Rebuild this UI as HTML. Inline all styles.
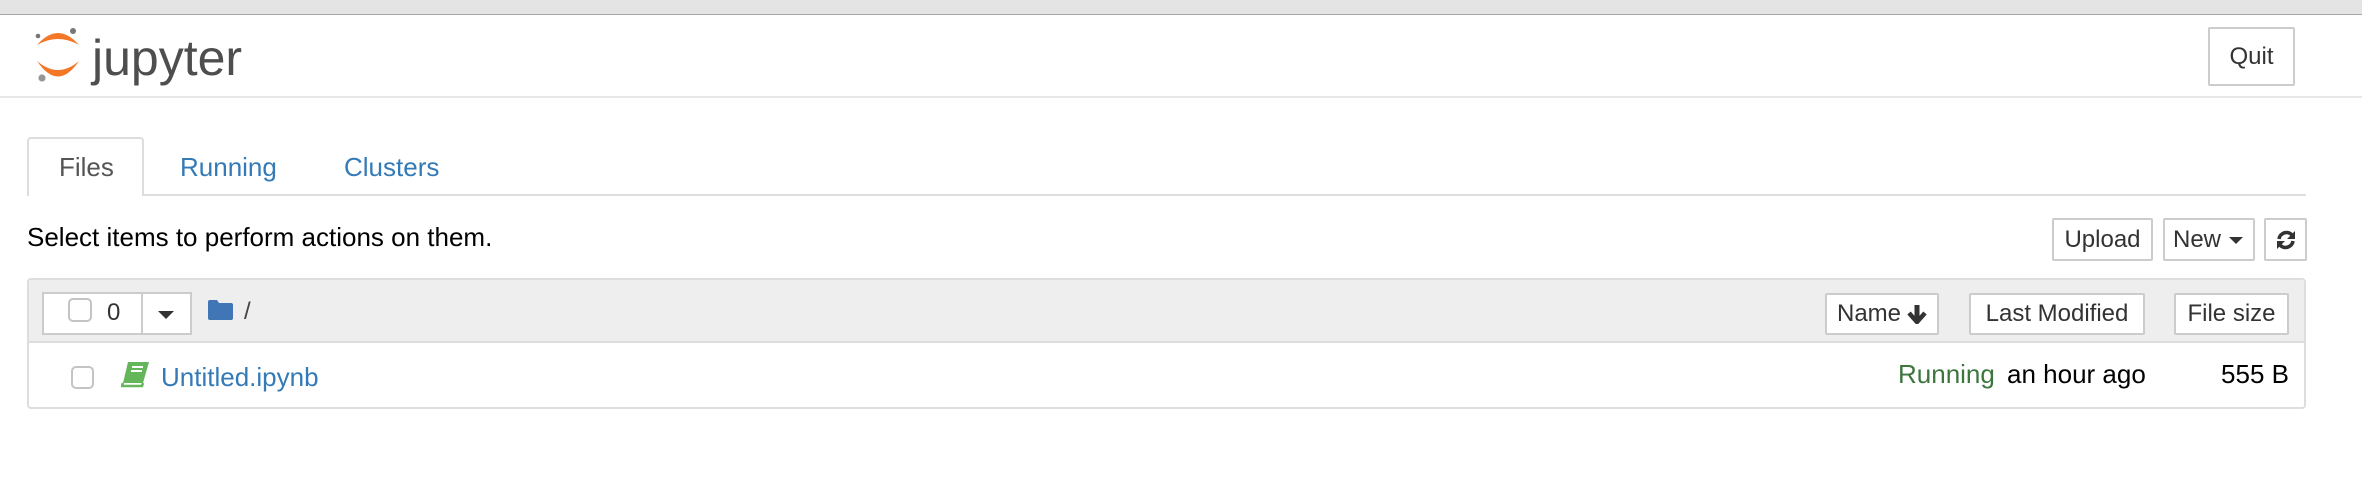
<!DOCTYPE html>
<html><head><meta charset="utf-8"><style>
*{margin:0;padding:0;box-sizing:border-box}
html,body{width:2362px;height:482px;overflow:hidden;background:#fff;font-family:"Liberation Sans",Arial,sans-serif;position:relative}
.a{position:absolute;white-space:nowrap}
.t26{font-size:26px;line-height:26px}
.btn{position:absolute;border:2px solid #ccc;background:#fff;display:flex;align-items:center;justify-content:center;font-size:24px;color:#333;border-radius:2px}
.link{color:#337ab7}
</style></head><body>
<div class="a" style="left:0;top:0;width:2362px;height:15px;background:#e4e4e4;border-bottom:1px solid #a5a5a5"></div>
<svg class="a" style="left:0;top:0" width="100" height="100">
<path d="M37,45 Q58,21 79,45 Q58,33 37,45 Z" fill="#f37726"/>
<path d="M37,61 Q58,92 79,61 Q58,79 37,61 Z" fill="#f37726"/>
<circle cx="38" cy="36" r="2.3" fill="#767677"/>
<circle cx="73" cy="31" r="3" fill="#767677"/>
<circle cx="42" cy="78" r="3.6" fill="#989798"/>
</svg>
<div class="a" style="left:92px;top:33px;font-size:50px;line-height:50px;color:#4e4e4e">jupyter</div>
<div class="btn" style="left:2208px;top:27px;width:87px;height:59px">Quit</div>
<div class="a" style="left:0;top:96px;width:2362px;height:2px;background:#e7e7e7"></div>

<div class="a" style="left:27px;top:194px;width:2279px;height:2px;background:#ddd"></div>
<div class="a" style="left:27px;top:137px;width:117px;height:59px;border:2px solid #ddd;border-bottom:none;border-radius:4px 4px 0 0;background:#fff"></div>
<div class="a t26" style="left:59px;top:154px;color:#555">Files</div>
<div class="a t26 link" style="left:180px;top:154px">Running</div>
<div class="a t26 link" style="left:344px;top:154px">Clusters</div>

<div class="a t26" style="left:27px;top:224px;color:#000">Select items to perform actions on them.</div>
<div class="btn" style="left:2052px;top:218px;width:101px;height:43px">Upload</div>
<div class="btn" style="left:2163px;top:218px;width:92px;height:43px">New<svg width="18" height="10" style="margin-left:6px"><path d="M2,2 L16,2 L9,9 Z" fill="#333"/></svg></div>
<div class="btn" style="left:2264px;top:218px;width:43px;height:43px"><svg width="22" height="22" viewBox="0 0 22 22"><path d="M4,10 A7.5,7.5 0 0 1 17,6" stroke="#333" stroke-width="3.6" fill="none"/><path d="M20,2 L20,10 L12,10 Z" fill="#333"/><path d="M18,12 A7.5,7.5 0 0 1 5,16" stroke="#333" stroke-width="3.6" fill="none"/><path d="M2,20 L2,12 L10,12 Z" fill="#333"/></svg></div>

<div class="a" style="left:27px;top:278px;width:2279px;height:131px;border:2px solid #ddd;border-radius:4px;background:#fff"></div>
<div class="a" style="left:29px;top:280px;width:2275px;height:63px;background:#eee;border-bottom:2px solid #ddd"></div>
<div class="a" style="left:42px;top:292px;width:150px;height:43px;border:2px solid #ccc;background:#fff"></div>
<div class="a" style="left:141px;top:292px;width:2px;height:43px;background:#ccc"></div>
<div class="a" style="left:68px;top:298px;width:24px;height:24px;border:2px solid #c4c4c4;border-radius:5px;background:#fff"></div>
<div class="a" style="left:107px;top:301px;font-size:24px;line-height:24px;color:#333">0</div>
<svg class="a" style="left:157px;top:310px" width="18" height="10"><path d="M1,1 L17,1 L9,9 Z" fill="#333"/></svg>
<svg class="a" style="left:208px;top:299px" width="26" height="22"><path d="M0,3 Q0,1 2,1 L9,1 L11,4 L23,4 Q25,4 25,6 L25,19 Q25,21 23,21 L2,21 Q0,21 0,19 Z" fill="#4176b6"/></svg>
<div class="a" style="left:244px;top:300px;font-size:24px;line-height:24px;color:#444">/</div>
<div class="btn" style="left:1825px;top:293px;width:114px;height:42px">Name<svg width="20" height="20" viewBox="0 0 20 20" style="margin-left:6px"><path d="M10,1 L10,15" stroke="#333" stroke-width="5"/><path d="M2,9 L10,18 L18,9" stroke="#333" stroke-width="4.5" fill="none" stroke-linejoin="miter"/></svg></div>
<div class="btn" style="left:1969px;top:293px;width:176px;height:42px">Last Modified</div>
<div class="btn" style="left:2174px;top:293px;width:115px;height:42px">File size</div>

<div class="a" style="left:71px;top:366px;width:23px;height:23px;border:2px solid #c4c4c4;border-radius:5px;background:#fff"></div>
<svg class="a" style="left:121px;top:361px" width="30" height="27" viewBox="0 0 30 27"><path d="M7,1 L28,1 L22,22 L2,22 Z" fill="#65b55a"/><path d="M2,22 L1,25 L21,25 L22,22" stroke="#65b55a" stroke-width="2.5" fill="none"/><path d="M11,6 L22,6 M10,10 L21,10" stroke="#fff" stroke-width="2"/></svg>
<div class="a t26 link" style="left:161px;top:364px">Untitled.ipynb</div>
<div class="a t26" style="left:1898px;top:361px;color:#3c763d">Running</div>
<div class="a t26" style="left:2007px;top:361px;color:#000">an hour ago</div>
<div class="a t26" style="left:2200px;width:89px;top:361px;color:#000;text-align:right">555 B</div>
</body></html>
